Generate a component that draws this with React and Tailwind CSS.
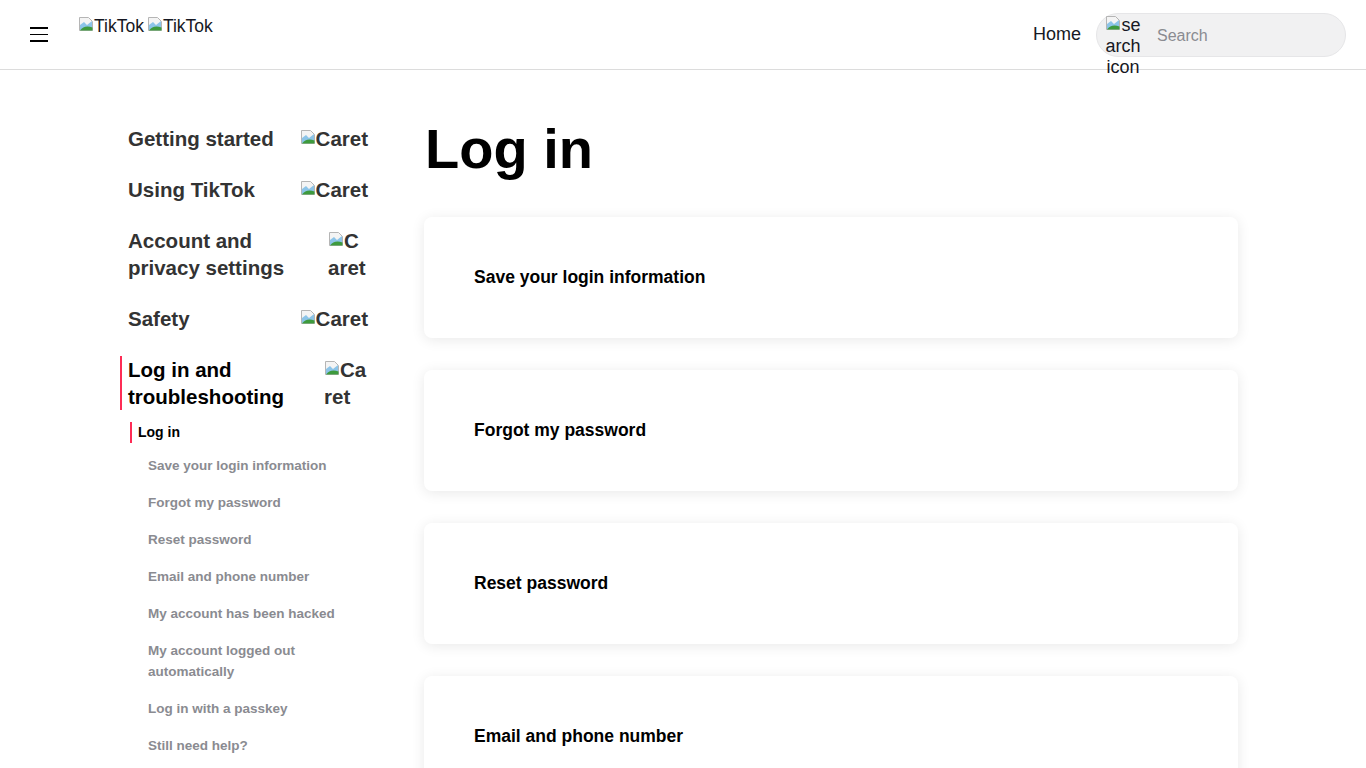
import { useState } from 'react';

function BrokenImg({ className = '' }) {
  return (
    <svg viewBox="0 0 16 16" className={`inline-block w-4 h-4 align-top ${className}`}>
      <path d="M1.5 1.5h9l4 4v9h-13z" fill="#f4f4f4" stroke="#b5b5b5" />
      <path d="M2 9l4-3 3 3 5-4v9H2z" fill="#8cc4e8" />
      <path d="M2 14.5c3-4 7-5 12.5-3v3z" fill="#3d9a3d" />
    </svg>
  );
}

function AltImg({ alt, className = '' }) {
  return (
    <span className={className}>
      <BrokenImg />
      {alt}
    </span>
  );
}

const categories = [
  { label: 'Getting started', caret: '' },
  { label: 'Using TikTok', caret: '' },
  { label: 'Account and privacy settings', caret: 'w-[40px]' },
  { label: 'Safety', caret: '' },
];

const subLinks = [
  'Save your login information',
  'Forgot my password',
  'Reset password',
  'Email and phone number',
  'My account has been hacked',
  'My account logged out automatically',
  'Log in with a passkey',
  'Still need help?',
];

const cards = ['Save your login information', 'Forgot my password', 'Reset password', 'Email and phone number', 'My account has been hacked'];

export default function App() {
  const [query, setQuery] = useState('');

  return (
    <div className="min-h-screen bg-white text-black font-['Liberation_Sans',Arial,sans-serif]">
      <header className="h-[70px] border-b border-[#dcdcdc] flex items-center pl-[30px] pr-[20px]">
        <button className="w-[18px] flex flex-col gap-[5px] shrink-0">
          <span className="block h-[1.5px] bg-black" />
          <span className="block h-[1.5px] bg-black" />
          <span className="block h-[1.5px] bg-black" />
        </button>
        <div className="ml-[30px] self-start mt-[16px] flex gap-[3px] text-[17.5px] leading-[20px] text-[#161823]">
          <AltImg alt="TikTok" />
          <AltImg alt="TikTok" />
        </div>
        <nav className="ml-auto flex items-center">
          <a className="text-[18px] text-[#161823] mr-[15px]">Home</a>
          <div className="w-[250px] h-[44px] rounded-full bg-[#f1f1f2] border border-[#e6e6e8] flex items-start pl-[8px]">
            <span className="w-[36px] mt-[1px] text-[18px] leading-[21px] text-[#161823] break-all shrink-0 text-center relative z-10">
              <BrokenImg />se arch icon
            </span>
            <input
              value={query}
              onChange={(e) => setQuery(e.target.value)}
              placeholder="Search"
              className="ml-[16px] mt-[10px] bg-transparent outline-none text-[16px] text-[#161823] placeholder:text-[#8a8b91] w-[170px]"
            />
          </div>
        </nav>
      </header>

      <div className="flex pl-[120px] pt-[43px] gap-[56px]">
        <aside className="w-[248px] shrink-0">
          {categories.map((c) => (
            <div key={c.label} className="flex justify-between items-start py-[12px] pl-[6px] border-l-2 border-transparent">
              <span className="text-[20.5px] font-bold leading-[27px] text-[#333] w-[170px]">{c.label}</span>
              <span className={`${c.caret} text-[20.5px] font-bold leading-[27px] text-[#333] break-all shrink-0`}>
                <BrokenImg className="mt-[4px]" />Caret
              </span>
            </div>
          ))}
          <div className="flex justify-between items-start mt-[12px] pl-[6px] border-l-2 border-[#fe2c55]">
            <span className="text-[20.5px] font-bold leading-[27px] text-black w-[170px]">Log in and troubleshooting</span>
            <span className="w-[44px] text-[20.5px] font-bold leading-[27px] text-[#333] break-all shrink-0">
              <BrokenImg className="mt-[4px]" />Caret
            </span>
          </div>
          <div className="mt-[12px] ml-[10px] pl-[6px] border-l-2 border-[#fe2c55] text-[14px] font-bold leading-[21px] text-black">
            Log in
          </div>
          <ul className="mt-[12px] pl-[28px] pr-[20px]">
            {subLinks.map((s) => (
              <li key={s} className="text-[13.5px] font-bold leading-[21px] text-[#8a8b91] pb-[16px]">
                {s}
              </li>
            ))}
          </ul>
        </aside>

        <main className="w-[814px] shrink-0">
          <h1 className="text-[56px] font-bold leading-[72px] ml-[1px]">Log in</h1>
          <div className="mt-[32px] flex flex-col gap-[32px]">
            {cards.map((c) => (
              <div key={c} className="h-[121px] rounded-[8px] bg-white shadow-[0_2px_14px_rgba(0,0,0,0.09)] flex items-center px-[50px]">
                <span className="text-[17.5px] font-bold text-black">{c}</span>
              </div>
            ))}
          </div>
        </main>
      </div>
    </div>
  );
}
